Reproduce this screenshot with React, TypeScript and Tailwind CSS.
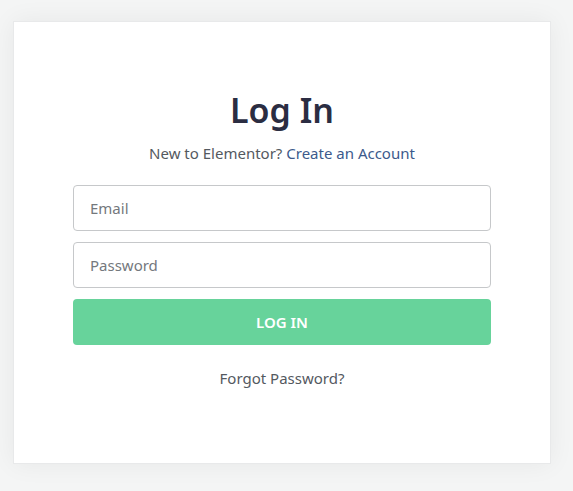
export default function App() {
    return (
        <div className="min-h-[491px] bg-[#f4f5f5] pt-[21px] pl-[13px]" style={{ fontFamily: '"Noto Sans", "Open Sans", sans-serif' }}>
            {/* Login card */}
            <div className="w-[538px] h-[443px] bg-white border border-[#e8e9ea] shadow-[0_0_24px_rgba(0,0,0,0.06)] px-[59px] pt-[64px] flex flex-col items-center">
                <h1 className="text-[34px] leading-[48px] font-semibold text-[#2b2d42]">Log In</h1>
                <p className="mt-[9px] text-[15px] leading-[20px] text-[#54595f]">
                    New to Elementor? <a href="#" className="text-[#3c5a8c]">Create an Account</a>
                </p>
                <form className="w-full mt-[22px] flex flex-col gap-[11px]">
                    <input
                        type="email"
                        placeholder="Email"
                        className="h-[46px] w-full rounded-[4px] border border-[#c6c8ca] px-4 text-[15px] text-[#54595f] placeholder:text-[#74787d] outline-none"
                    />
                    <input
                        type="password"
                        placeholder="Password"
                        className="h-[46px] w-full rounded-[4px] border border-[#c6c8ca] px-4 text-[15px] text-[#54595f] placeholder:text-[#74787d] outline-none"
                    />
                    <button type="button" className="h-[46px] w-full rounded-[4px] bg-[#67d39b] text-white text-[15px] font-semibold">
                        LOG IN
                    </button>
                </form>
                <a href="#" className="mt-[23px] text-[15px] leading-[20px] text-[#54595f]">Forgot Password?</a>
            </div>
        </div>
    );
}
